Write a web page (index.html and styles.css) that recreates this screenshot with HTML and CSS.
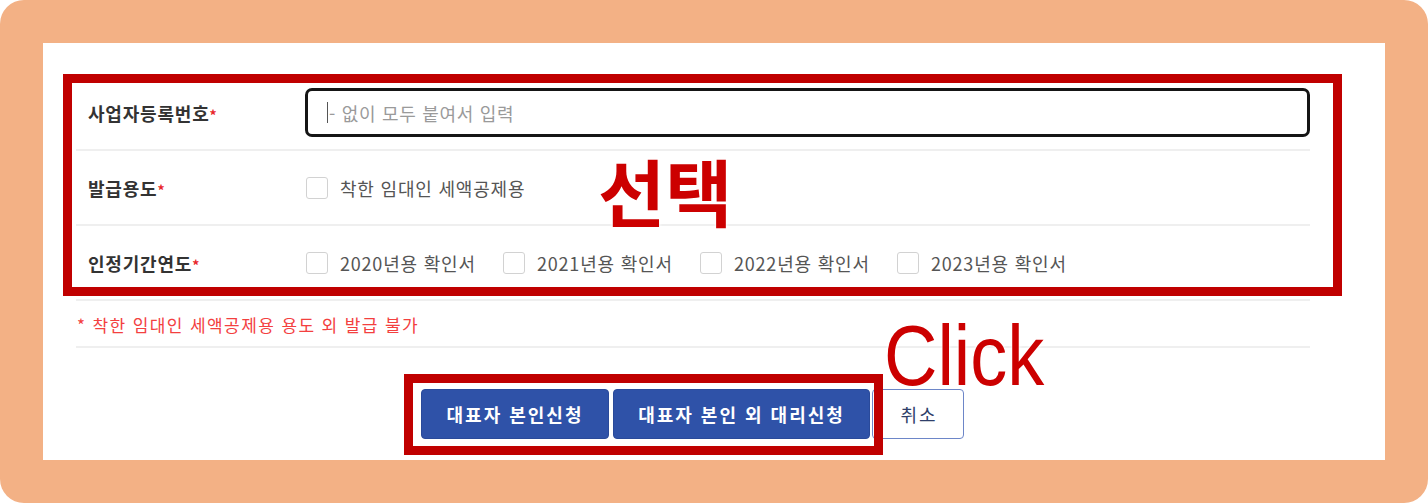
FILE: index.html
```html
<!DOCTYPE html>
<html lang="ko">
<head>
    <meta charset="UTF-8">
    <meta name="viewport" content="width=device-width, initial-scale=1.0">
    <title>확인서 발급 신청</title>
    <link rel="stylesheet" href="styles.css">
</head>
<body>
    <div class="frame">
        <div class="panel">
            <div class="form-table">
                <div class="form-row">
                    <div class="row-label">사업자등록번호<span class="req">*</span></div>
                    <div class="row-value">
                        <div class="text-input">
                            <span class="caret"></span>
                            <span class="placeholder">- 없이 모두 붙여서 입력</span>
                        </div>
                    </div>
                </div>
                <div class="form-row">
                    <div class="row-label">발급용도<span class="req">*</span></div>
                    <div class="row-value">
                        <label class="check"><span class="box"></span>착한 임대인 세액공제용</label>
                    </div>
                </div>
                <div class="form-row">
                    <div class="row-label">인정기간연도<span class="req">*</span></div>
                    <div class="row-value">
                        <label class="check year"><span class="box"></span>2020년용 확인서</label>
                        <label class="check year"><span class="box"></span>2021년용 확인서</label>
                        <label class="check year"><span class="box"></span>2022년용 확인서</label>
                        <label class="check year"><span class="box"></span>2023년용 확인서</label>
                    </div>
                </div>
                <div class="note-row">* 착한 임대인 세액공제용 용도 외 발급 불가</div>
            </div>
            <div class="btn-row">
                <button class="btn btn-primary btn-self">대표자 본인신청</button>
                <button class="btn btn-primary btn-proxy">대표자 본인 외 대리신청</button>
                <button class="btn btn-cancel">취소</button>
            </div>
        </div>

        <!-- annotations -->
        <div class="mark mark-form"></div>
        <div class="mark mark-btns"></div>
        <div class="callout callout-select">선택</div>
        <div class="callout callout-click">Click</div>
    </div>
</body>
</html>
```

FILE: styles.css
```css
html, body {
    margin: 0;
    padding: 0;
    background: #ffffff;
}
body {
    font-family: "Noto Sans CJK KR", "Noto Sans", sans-serif;
    color: #333;
}
.frame {
    position: relative;
    width: 1428px;
    height: 503px;
    box-sizing: border-box;
    padding: 43px;
    background: #f3b185;
    border-radius: 24px;
}
.panel {
    width: 1342px;
    height: 417px;
    box-sizing: border-box;
    padding: 33px 75px 0 33px;
    background: #ffffff;
}
.form-row {
    display: flex;
    align-items: center;
    height: 75px;
    box-sizing: border-box;
    border-bottom: 2px solid #efefef;
}
.row-label {
    width: 230px;
    padding-left: 12px;
    box-sizing: border-box;
    font-size: 18px;
    font-weight: bold;
    color: #333;
    letter-spacing: 0.8px;
}
.req {
    color: #e8262a;
    font-size: 14px;
}
.row-value {
    flex: 1;
    display: flex;
    align-items: center;
}
.text-input {
    flex: 1;
    height: 49px;
    margin-left: -1px;
    box-sizing: border-box;
    border: 3px solid #151515;
    border-radius: 7px;
    display: flex;
    align-items: center;
    padding-left: 19px;
}
.caret {
    width: 1px;
    height: 21px;
    background: #555;
    margin-right: 1px;
}
.placeholder {
    font-size: 18px;
    color: #9a9a9a;
    letter-spacing: 0.7px;
}
.check {
    display: flex;
    align-items: center;
    font-size: 18px;
    color: #555;
    letter-spacing: 0.8px;
}
.check.year {
    width: 197px;
}
.box {
    width: 20px;
    height: 20px;
    border: 1px solid #d2d2d2;
    border-radius: 3px;
    margin-right: 12px;
    background: #fff;
}
.note-row {
    height: 47px;
    box-sizing: border-box;
    border-bottom: 2px solid #efefef;
    padding: 11px 0 0 1px;
    font-size: 17px;
    letter-spacing: 1.4px;
    color: #f3403f;
}
.btn-row {
    display: flex;
    padding-left: 345px;
    margin-top: 41px;
}
.btn {
    height: 50px;
    border-radius: 4px;
    font-family: inherit;
    font-size: 18px;
    font-weight: bold;
    letter-spacing: 2px;
    cursor: pointer;
}
.btn-primary {
    background: #2f52a8;
    border: 1px solid #2a4a9a;
    color: #fff;
}
.btn-self {
    width: 188px;
    margin-right: 4px;
}
.btn-proxy {
    width: 257px;
    margin-right: 2px;
}
.btn-cancel {
    width: 92px;
    padding-left: 8px;
    background: #fff;
    border: 1px solid #6d86c8;
    color: #2f3f6a;
    font-weight: normal;
}
.mark {
    position: absolute;
    border: 9px solid #c00000;
    box-sizing: border-box;
}
.mark-form {
    left: 63px;
    top: 74px;
    width: 1279px;
    height: 222px;
}
.mark-btns {
    left: 404px;
    top: 374px;
    width: 479px;
    height: 81px;
}
.callout {
    position: absolute;
    color: #cc0000;
    line-height: 1;
    text-shadow: 0 0 4px #fff, 0 0 4px #fff;
}
.callout-select {
    left: 598px;
    top: 153px;
    font-size: 73px;
    font-weight: bold;
}
.callout-click {
    left: 884px;
    top: 312px;
    font-family: "Liberation Sans", Arial, sans-serif;
    font-size: 86px;
    transform: scaleX(0.86);
    transform-origin: left top;
}
```
